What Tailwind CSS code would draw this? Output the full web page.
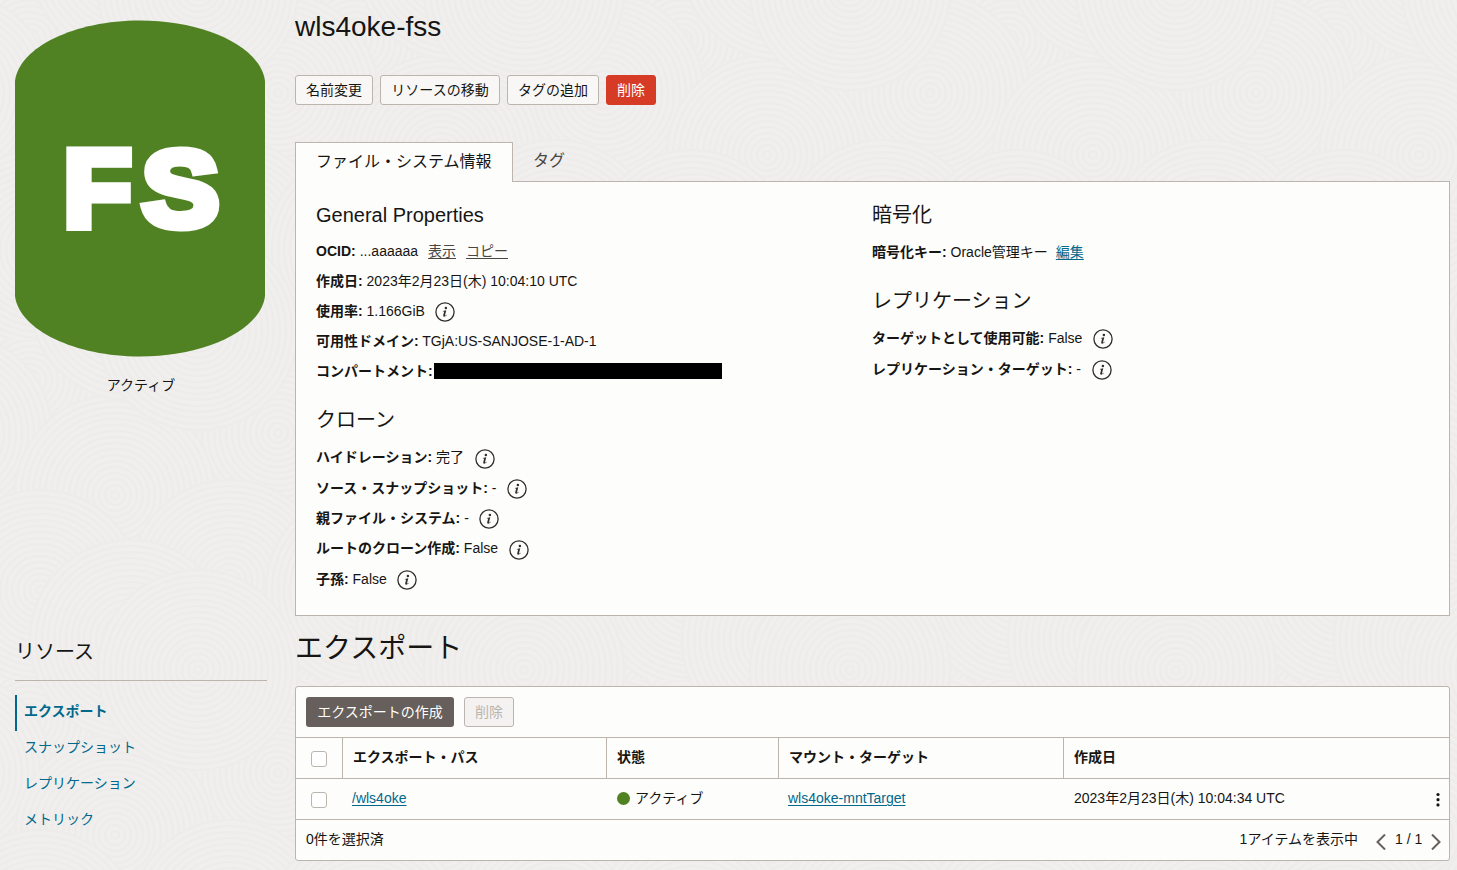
<!DOCTYPE html>
<html lang="ja">
<head>
<meta charset="utf-8">
<title>wls4oke-fss</title>
<script src="https://cdn.jsdelivr.net/npm/@tailwindcss/browser@4"></script>
</head>
<body class="relative h-[870px] w-[1457px] overflow-hidden bg-[#f0efed] font-['Liberation_Sans','Noto_Sans_CJK_JP',sans-serif] text-[14px] leading-5 text-[#161513]">

<!-- Decorative swirl texture -->
<svg class="absolute inset-0 -z-10 h-full w-full" fill="none">
  <defs>
    <g id="rings" stroke="#edecea" stroke-width="2.200">
      <circle r="101" fill="#f0efed" stroke="none"/>
      <circle r="4"/><circle r="10"/><circle r="16"/><circle r="22"/><circle r="28"/><circle r="34"/><circle r="40"/><circle r="46"/><circle r="52"/><circle r="58"/><circle r="64"/><circle r="70"/><circle r="76"/><circle r="82"/><circle r="88"/><circle r="94"/><circle r="100"/>
    </g>
    <pattern id="swirl" width="326" height="340" patternUnits="userSpaceOnUse">
      <use href="#rings" x="30" y="40"/><use href="#rings" x="356" y="40"/><use href="#rings" x="30" y="380"/><use href="#rings" x="356" y="380"/>
      <use href="#rings" x="-48" y="93"/><use href="#rings" x="278" y="93"/>
      <use href="#rings" x="115" y="155"/><use href="#rings" x="441" y="155"/>
      <use href="#rings" x="230" y="240"/><use href="#rings" x="-96" y="240"/>
      <use href="#rings" x="40" y="250"/><use href="#rings" x="366" y="250"/>
      <use href="#rings" x="130" y="300"/><use href="#rings" x="130" y="-40"/>
      <use href="#rings" x="198" y="-10"/><use href="#rings" x="198" y="330"/>
      <use href="#rings" x="-128" y="-10"/><use href="#rings" x="-128" y="330"/>
    </pattern>
    <symbol id="info" viewBox="0 0 20 20">
      <circle cx="10" cy="10" r="9.1" fill="none" stroke="#312d2a" stroke-width="1.3"/>
      <circle cx="10.900" cy="5.900" r="1.250" fill="#312d2a"/>
      <path d="M7.900 8.900L11.300 8.200 10 13.300Q9.900 13.800 10.400 13.600L11.600 12.700 11.900 13.100Q10.300 14.900 9 14.800 7.900 14.600 8.200 13.200L9.200 9.500 7.900 9.400Z" fill="#312d2a"/>
    </symbol>
  </defs>
  <rect width="1457" height="870" fill="url(#swirl)"/>
</svg>

<div class="flex h-full">
  <aside class="w-[295px] shrink-0 pl-[15px]">
    <svg class="mt-[20px] block h-[337px] w-[250px]" viewBox="0 0 250 337">
      <path d="M0 61C4 27 60 .5 125 .5S246 27 250 61V276C246 310 190 336.500 125 336.500S4 310 0 276Z" fill="#508223"/>
      <g class="font-['Liberation_Sans',sans-serif] font-bold" fill="#fff" stroke="#fff" stroke-width="9" stroke-miterlimit="8">
        <text x="48.500" y="206.500" font-size="109" textLength="68" lengthAdjust="spacingAndGlyphs">F</text>
        <text x="127" y="206" font-size="107" textLength="77" lengthAdjust="spacingAndGlyphs">S</text>
      </g>
    </svg>
    <div class="mt-[18px] w-[252px] text-center">アクティブ</div>
    <h2 class="mt-[241px] h-[45px] w-[252px] border-b border-[#bbb5ae] pt-px text-[20px] leading-[30px]">リソース</h2>
    <nav class="mt-[14px] flex flex-col text-[#00688c]">
      <a class="h-9 border-l-2 border-[#00688c] pl-[7px] leading-[32px] font-bold">エクスポート</a>
      <a class="h-9 pl-[9px] leading-[32px]">スナップショット</a>
      <a class="h-9 pl-[9px] leading-[32px]">レプリケーション</a>
      <a class="h-9 pl-[9px] leading-[32px]">メトリック</a>
    </nav>
  </aside>

  <main class="w-[1155px] shrink-0">
    <h1 class="mt-[11px] h-8 text-[28px] leading-8">wls4oke-fss</h1>
    <div class="mt-[32px] flex h-[30px] gap-[7px] leading-7">
      <button class="w-[78px] rounded-[3px] border border-[#bbb5ae] bg-[#f8f7f5]">名前変更</button>
      <button class="w-[120px] rounded-[3px] border border-[#bbb5ae] bg-[#f8f7f5]">リソースの移動</button>
      <button class="w-[92px] rounded-[3px] border border-[#bbb5ae] bg-[#f8f7f5]">タグの追加</button>
      <button class="w-[50px] rounded-[3px] border border-[#d63b25] bg-[#d63b25] text-white">削除</button>
    </div>

    <div class="relative z-10 mt-[37px] flex h-10 text-[16px] leading-[38px]">
      <div class="w-[218px] border border-b-0 border-[#bbb5ae] bg-[#fdfdfb] pl-5">ファイル・システム情報</div>
      <div class="pl-5 text-[#4a4642]">タグ</div>
    </div>
    <section class="-mt-px flex h-[435px] border border-[#bbb5ae] bg-[#fdfdfb] pt-[18px] pl-5">
      <div class="w-[556px]">
        <h3 class="h-[36px] text-[20px] leading-[30px]">General Properties</h3>
        <div class="flex h-[30px] items-center whitespace-pre"><b>OCID:</b><span class="ml-1">...aaaaaa</span><u class="ml-[10px] text-[#4a4642] underline-offset-2">表示</u><u class="ml-[10px] text-[#4a4642] underline-offset-2">コピー</u></div>
        <div class="flex h-[30px] items-center whitespace-pre"><b>作成日:</b> 2023年2月23日(木) 10:04:10 UTC</div>
        <div class="flex h-[30px] items-center whitespace-pre"><b>使用率:</b> 1.166GiB<svg class="mt-0.5 ml-[10px] h-5 w-5"><use href="#info"/></svg></div>
        <div class="flex h-[30px] items-center whitespace-pre"><b>可用性ドメイン:</b> TGjA:US-SANJOSE-1-AD-1</div>
        <div class="flex h-[30px] items-center"><b>コンパートメント:</b><span class="ml-px h-4 w-[288px] bg-black"></span></div>
        <h3 class="mt-[19px] h-[37px] text-[20px] leading-[30px]">クローン</h3>
        <div class="flex h-[30.4px] items-center whitespace-pre"><b>ハイドレーション:</b> 完了<svg class="mt-[3px] ml-[11px] h-5 w-5"><use href="#info"/></svg></div>
        <div class="flex h-[30.4px] items-center whitespace-pre"><b>ソース・スナップショット:</b> -<svg class="mt-0.5 ml-[10px] h-5 w-5"><use href="#info"/></svg></div>
        <div class="flex h-[30.4px] items-center whitespace-pre"><b>親ファイル・システム:</b> -<svg class="mt-0.5 ml-[10px] h-5 w-5"><use href="#info"/></svg></div>
        <div class="flex h-[30.4px] items-center whitespace-pre"><b>ルートのクローン作成:</b> False<svg class="mt-[3px] ml-[11px] h-5 w-5"><use href="#info"/></svg></div>
        <div class="flex h-[30.4px] items-center whitespace-pre"><b>子孫:</b> False<svg class="mt-0.5 ml-[10px] h-5 w-5"><use href="#info"/></svg></div>
      </div>
      <div>
        <h3 class="h-[37px] text-[20px] leading-[30px]">暗号化</h3>
        <div class="flex h-[30px] items-center whitespace-pre"><b>暗号化キー:</b> Oracle管理キー<u class="ml-2 text-[#00688c] underline-offset-2">編集</u></div>
        <h3 class="mt-[19px] h-[37px] text-[20px] leading-[30px]">レプリケーション</h3>
        <div class="flex h-[30.4px] items-center whitespace-pre"><b>ターゲットとして使用可能:</b> False<svg class="mt-0.5 ml-[11px] h-5 w-5"><use href="#info"/></svg></div>
        <div class="flex h-[30.4px] items-center whitespace-pre"><b>レプリケーション・ターゲット:</b> -<svg class="mt-0.5 ml-[11px] h-5 w-5"><use href="#info"/></svg></div>
      </div>
    </section>

    <h2 class="mt-[13px] h-10 text-[28px] leading-10">エクスポート</h2>
    <section class="mt-[17px] h-[175px] rounded-[3px] border border-[#bbb5ae] bg-[#fdfdfb]">
      <div class="flex h-[50px] gap-[10px] pt-[10px] pl-[10px] leading-7">
        <button class="h-[30px] w-[148px] rounded-[3px] bg-[#665f5b] text-white">エクスポートの作成</button>
        <button class="h-[30px] w-[50px] rounded-[3px] border border-[#bbb5ae] bg-[#f4f2f1] text-[#bbb5ae]">削除</button>
      </div>
      <div class="grid h-[41px] grid-cols-[47px_264px_172px_285px_1fr] border-t border-[#bbb5ae] leading-[38px] font-bold">
        <div class="border-r border-[#bbb5ae] pt-[13px] pl-[15px]"><div class="h-4 w-4 rounded-[3px] border border-[#bbb5ae] bg-white"></div></div>
        <div class="border-r border-[#bbb5ae] pl-[10px]">エクスポート・パス</div>
        <div class="border-r border-[#bbb5ae] pl-[10px]">状態</div>
        <div class="border-r border-[#bbb5ae] pl-[10px]">マウント・ターゲット</div>
        <div class="pl-[10px]">作成日</div>
      </div>
      <div class="grid h-[41px] grid-cols-[47px_264px_172px_285px_1fr] border-t border-[#bbb5ae] leading-[38px]">
        <div class="pt-[13px] pl-[15px]"><div class="h-4 w-4 rounded-[3px] border border-[#bbb5ae] bg-white"></div></div>
        <div class="pl-[9px]"><u class="text-[#00688c] underline-offset-2">/wls4oke</u></div>
        <div class="flex pl-[10px]"><span class="mt-[13px] mr-[5px] h-[13px] w-[13px] rounded-full bg-[#508223]"></span>アクティブ</div>
        <div class="pl-[9px]"><u class="text-[#00688c] underline-offset-2">wls4oke-mntTarget</u></div>
        <div class="flex justify-between pr-[9px] pl-[10px]">2023年2月23日(木) 10:04:34 UTC
          <svg class="mt-[13px] h-4 w-1" viewBox="0 0 4 16" fill="#161513"><circle cx="2" cy="2.500" r="1.600"/><circle cx="2" cy="7.700" r="1.600"/><circle cx="2" cy="12.900" r="1.600"/></svg>
        </div>
      </div>
      <div class="flex h-[41px] border-t border-[#bbb5ae] pr-[8px] pl-[10px] leading-[38px]">
        <div class="flex-1">0件を選択済</div>
        <div>1アイテムを表示中</div>
        <svg class="mt-[14px] ml-[18px] h-4 w-[10px]" viewBox="0 0 10 16" fill="none" stroke="#665f5b" stroke-width="2"><path d="M9 .5L1.500 8 9 15.500"/></svg>
        <div class="ml-[9px] w-[27px] whitespace-nowrap">1 / 1</div>
        <svg class="mt-[14px] ml-[9px] h-4 w-[10px]" viewBox="0 0 10 16" fill="none" stroke="#665f5b" stroke-width="2"><path d="M1 .5L8.500 8 1 15.500"/></svg>
      </div>
    </section>
  </main>
</div>
</body>
</html>
